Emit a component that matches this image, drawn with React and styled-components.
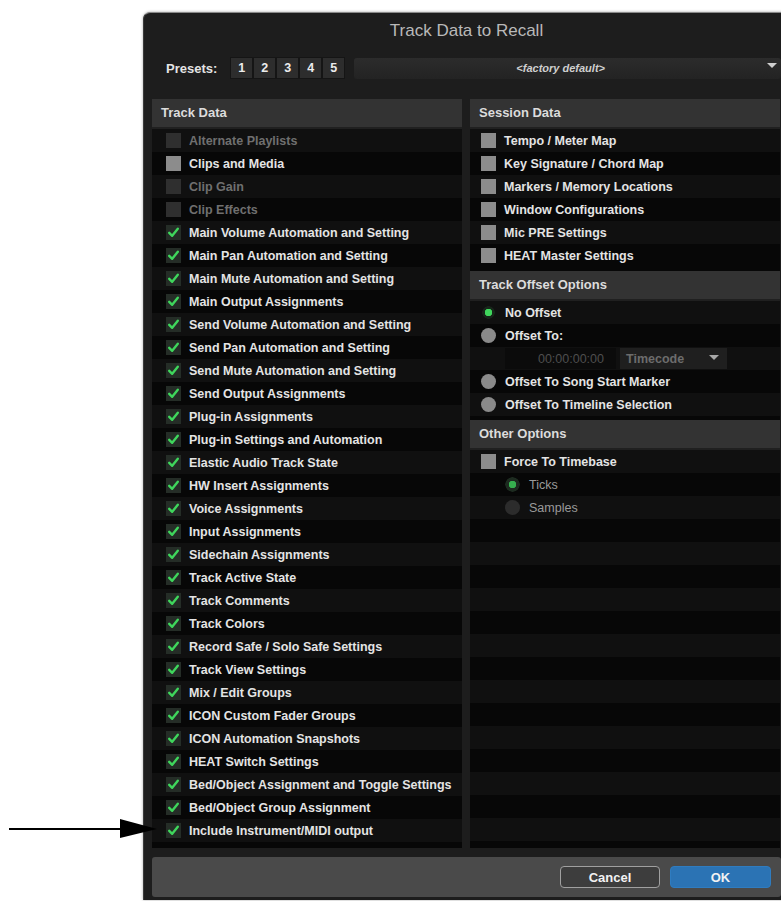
import styled, { createGlobalStyle } from "styled-components";

const GlobalStyle = createGlobalStyle`
  html, body {
    margin: 0;
    padding: 0;
    background: #ffffff;
    overflow: hidden;
  }
  * { box-sizing: border-box; }
`;

const trackItems = [
  { label: "Alternate Playlists", state: "disabled" },
  { label: "Clips and Media", state: "off" },
  { label: "Clip Gain", state: "disabled" },
  { label: "Clip Effects", state: "disabled" },
  "Main Volume Automation and Setting",
  "Main Pan Automation and Setting",
  "Main Mute Automation and Setting",
  "Main Output Assignments",
  "Send Volume Automation and Setting",
  "Send Pan Automation and Setting",
  "Send Mute Automation and Setting",
  "Send Output Assignments",
  "Plug-in Assignments",
  "Plug-in Settings and Automation",
  "Elastic Audio Track State",
  "HW Insert Assignments",
  "Voice Assignments",
  "Input Assignments",
  "Sidechain Assignments",
  "Track Active State",
  "Track Comments",
  "Track Colors",
  "Record Safe / Solo Safe Settings",
  "Track View Settings",
  "Mix / Edit Groups",
  "ICON Custom Fader Groups",
  "ICON Automation Snapshots",
  "HEAT Switch Settings",
  "Bed/Object Assignment and Toggle Settings",
  "Bed/Object Group Assignment",
  "Include Instrument/MIDI output",
].map((el) => (typeof el === "string" ? { label: el, state: "on" } : el));

const sessionItems = [
  "Tempo / Meter Map",
  "Key Signature / Chord Map",
  "Markers / Memory Locations",
  "Window Configurations",
  "Mic PRE Settings",
  "HEAT Master Settings",
];

const CheckBox = ({ state }) => (
  <Box $state={state}>
    {state === "on" && (
      <svg width="13" height="13" viewBox="0 0 13 13">
        <path
          d="M2.2 6.8 L5.2 9.8 L10.8 2.8"
          fill="none"
          stroke="#3fd65c"
          strokeWidth="2.4"
          strokeLinecap="round"
          strokeLinejoin="round"
        />
      </svg>
    )}
  </Box>
);

const App = () => {
  return (
    <Page>
      <GlobalStyle />
      <Pointer width="160" height="24" viewBox="0 0 160 24">
        <line x1="9" y1="12" x2="124" y2="12" stroke="#000" strokeWidth="1.8" />
        <polygon points="120,2 157,12 120,21" fill="#000" />
      </Pointer>

      <Dialog>
        <Title>Track Data to Recall</Title>

        <PresetsRow>
          <PresetsLabel>Presets:</PresetsLabel>
          <PresetGroup>
            {[1, 2, 3, 4, 5].map((n) => (
              <PresetButton key={n}>{n}</PresetButton>
            ))}
          </PresetGroup>
          <PresetMenu>
            <span>&lt;factory default&gt;</span>
            <MenuArrow />
          </PresetMenu>
        </PresetsRow>

        <Columns>
          <Panel>
            <Header>Track Data</Header>
            <List $pad>
              {trackItems.map((el) => (
                <Row key={el.label}>
                  <CheckBox state={el.state} />
                  <Label $dim={el.state === "disabled"}>{el.label}</Label>
                </Row>
              ))}
            </List>
          </Panel>

          <Panel>
            <Header>Session Data</Header>
            <List>
              {sessionItems.map((el) => (
                <Row key={el} $right>
                  <CheckBox state="off" />
                  <Label>{el}</Label>
                </Row>
              ))}
            </List>

            <Header $gap>Track Offset Options</Header>
            <List>
              <Row $right>
                <Radio $kind="selected" />
                <Label>No Offset</Label>
              </Row>
              <Row $right>
                <Radio $kind="off" />
                <Label>Offset To:</Label>
              </Row>
              <FieldRow>
                <TimeField>00:00:00:00</TimeField>
                <TimeMenu>
                  <span>Timecode</span>
                  <MenuArrow $small />
                </TimeMenu>
              </FieldRow>
              <Row $right>
                <Radio $kind="off" />
                <Label>Offset To Song Start Marker</Label>
              </Row>
              <Row $right>
                <Radio $kind="off" />
                <Label>Offset To Timeline Selection</Label>
              </Row>
            </List>

            <Header $gap>Other Options</Header>
            <List $fill>
              <Row $right>
                <CheckBox state="off" />
                <Label>Force To Timebase</Label>
              </Row>
              <Row $right $indent>
                <Radio $kind="selectedDim" />
                <Label $muted>Ticks</Label>
              </Row>
              <Row $right $indent>
                <Radio $kind="disabled" />
                <Label $muted>Samples</Label>
              </Row>
            </List>
          </Panel>
        </Columns>

        <Footer>
          <Button>Cancel</Button>
          <Button $primary>OK</Button>
        </Footer>
      </Dialog>
    </Page>
  );
};

const Page = styled.div`
  position: relative;
  width: 781px;
  height: 901px;
  padding: 12px 0 0 143px;
  font-family: "Liberation Sans", Arial, sans-serif;
`;

const Pointer = styled.svg`
  position: absolute;
  left: 0;
  top: 817px;
  z-index: 2;
`;

const Dialog = styled.div`
  width: 646px;
  height: 888px;
  display: flex;
  flex-direction: column;
  background: #1d1d1d;
  border-top: 1px solid #8a8a8a;
  border-left: 1px solid #3a3a3a;
  border-radius: 7px 7px 0 0;
  box-shadow: 0 0 3px rgba(0, 0, 0, 0.35);
`;

const Title = styled.div`
  height: 33px;
  display: flex;
  align-items: center;
  justify-content: center;
  font-size: 17px;
  color: #b9b9b9;
  padding-top: 2px;
`;

const PresetsRow = styled.div`
  display: flex;
  align-items: center;
  height: 22px;
  margin-top: 11px;
  padding: 0 8px 0 22px;
`;

const PresetsLabel = styled.div`
  font-size: 13px;
  font-weight: bold;
  color: #e4e4e4;
  margin-right: 13px;
`;

const PresetGroup = styled.div`
  display: flex;
`;

const PresetButton = styled.div`
  width: 23px;
  height: 22px;
  display: flex;
  align-items: center;
  justify-content: center;
  background: #2d2d2d;
  border: 1px solid #151515;
  font-size: 12.5px;
  font-weight: bold;
  color: #ececec;
`;

const PresetMenu = styled.div`
  flex: 1;
  height: 21px;
  margin-left: 9px;
  position: relative;
  display: flex;
  align-items: center;
  justify-content: center;
  padding-right: 14px;
  background: linear-gradient(#2c2c2c, #232323);
  border-radius: 3px;
  font-size: 11px;
  font-weight: bold;
  font-style: italic;
  color: #cfcfcf;
`;

const MenuArrow = styled.i`
  position: absolute;
  right: ${(p) => (p.$small ? "8px" : "4px")};
  top: ${(p) => (p.$small ? "7px" : "5px")};
  width: 0;
  height: 0;
  border-left: 5px solid transparent;
  border-right: 5px solid transparent;
  border-top: 5px solid ${(p) => (p.$small ? "#a8a8a8" : "#cfcfcf")};
`;

const Columns = styled.div`
  flex: 1;
  display: grid;
  grid-template-columns: 310px 310px;
  gap: 8px;
  padding: 0 8px;
  margin-top: 20px;
`;

const Panel = styled.div`
  display: flex;
  flex-direction: column;
  background: #070707;
`;

const Header = styled.div`
  height: 30px;
  display: flex;
  align-items: center;
  padding: 0 8px 2px 9px;
  margin-top: ${(p) => (p.$gap ? "4px" : "0")};
  background: #333333;
  border-bottom: 2px solid #202020;
  font-size: 13px;
  font-weight: bold;
  color: #dcdcdc;
`;

const List = styled.div`
  flex: ${(p) => (p.$fill ? "1" : "none")};
  padding-bottom: ${(p) => (p.$pad ? "6px" : "0")};
  background: repeating-linear-gradient(
    to bottom,
    #101010 0,
    #101010 23px,
    #070707 23px,
    #070707 46px
  );
`;

const Row = styled.div`
  height: 23px;
  display: flex;
  align-items: center;
  padding-left: ${(p) => (p.$indent ? "35px" : p.$right ? "11px" : "14px")};
`;

const Box = styled.div`
  width: 15px;
  height: 15px;
  flex: none;
  display: flex;
  align-items: center;
  justify-content: center;
  margin-right: 8px;
  background: ${(p) =>
    p.$state === "on" ? "#252d27" : p.$state === "off" ? "#8c8c8c" : "#2f2f2f"};
`;

const Radio = styled.div`
  width: 15px;
  height: 15px;
  flex: none;
  margin: 0 9px 0 0;
  border-radius: 50%;
  background: ${(p) =>
    p.$kind === "selected"
      ? "radial-gradient(circle, #3fd65c 0 3.5px, #17261a 4px 6px, transparent 6.5px)"
      : p.$kind === "selectedDim"
      ? "radial-gradient(circle, #36b04f 0 3.5px, #1d2b20 4px 7px, transparent 7.5px)"
      : p.$kind === "off"
      ? "#8a8a8a"
      : "#2c2c2c"};
`;

const Label = styled.span`
  font-size: 12.5px;
  font-weight: ${(p) => (p.$muted ? "normal" : "bold")};
  white-space: nowrap;
  color: ${(p) => (p.$dim ? "#6f6f6f" : p.$muted ? "#9a9a9a" : "#e4e4e4")};
`;

const FieldRow = styled.div`
  height: 23px;
  display: flex;
  align-items: center;
  gap: 4px;
  padding-left: 35px;
`;

const TimeField = styled.div`
  width: 111px;
  height: 21px;
  display: flex;
  align-items: center;
  justify-content: flex-end;
  padding-right: 12px;
  background: #0b0b0b;
  font-size: 12.5px;
  color: #4e4e4e;
`;

const TimeMenu = styled.div`
  position: relative;
  width: 107px;
  height: 21px;
  display: flex;
  align-items: center;
  padding-left: 6px;
  background: #1f1f1f;
  font-size: 12.5px;
  font-weight: bold;
  color: #6c6c6c;
`;

const Footer = styled.div`
  height: 40px;
  margin: 9px 8px 3px 8px;
  display: flex;
  align-items: center;
  justify-content: flex-end;
  gap: 10px;
  padding-right: 10px;
  background: #4a4a4a;
  border-radius: 3px;
`;

const Button = styled.div`
  width: ${(p) => (p.$primary ? "101px" : "100px")};
  height: 22px;
  display: flex;
  align-items: center;
  justify-content: center;
  border-radius: 4px;
  background: ${(p) => (p.$primary ? "#2b73b4" : "#3d3d3d")};
  border: 1px solid ${(p) => (p.$primary ? "#2f7cc0" : "#a0a0a0")};
  font-size: 13px;
  font-weight: bold;
  color: #f2f2f2;
`;

export default App;
